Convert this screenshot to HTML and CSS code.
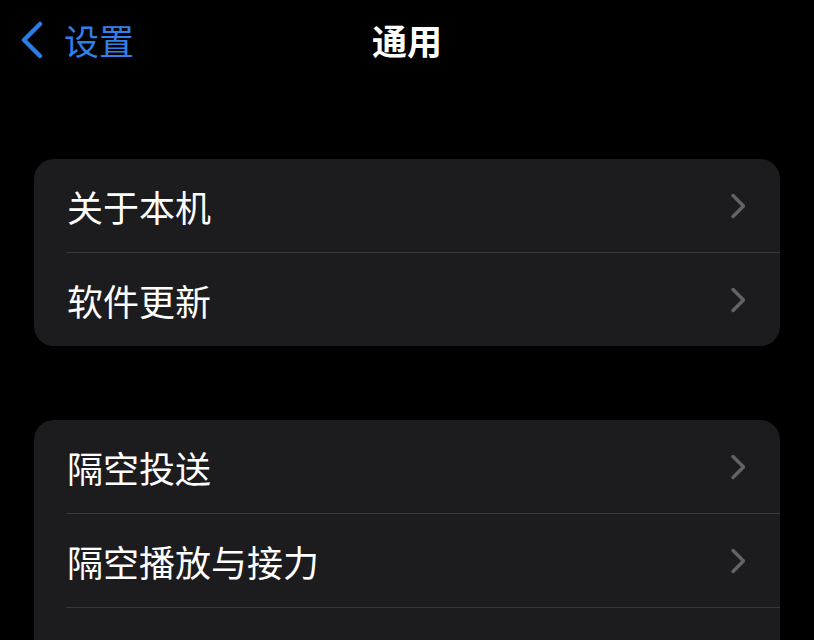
FILE: index.html
```html
<!DOCTYPE html>
<html lang="zh-CN">
<head>
<meta charset="utf-8">
<link rel="stylesheet" href="styles.css">
</head>
<body>
<div class="screen">
  <header class="nav">
    <div class="back">
      <svg class="back-icon" width="24" height="38" viewBox="0 0 24 38"><polyline points="20,3 4,19 20,35" fill="none" stroke="#2a7de6" stroke-width="4.5" stroke-linecap="round" stroke-linejoin="round"/></svg>
      <span class="back-label">设置</span>
    </div>
    <div class="title">通用</div>
    <div class="spacer"></div>
  </header>

  <section class="card first">
    <div class="row"><span class="label">关于本机</span><svg class="chev" width="16" height="26" viewBox="0 0 16 26"><polyline points="3,2.5 13.5,13 3,23.5" fill="none" stroke="#636367" stroke-width="3.4" stroke-linecap="round" stroke-linejoin="round"/></svg></div>
    <div class="row"><span class="label">软件更新</span><svg class="chev" width="16" height="26" viewBox="0 0 16 26"><polyline points="3,2.5 13.5,13 3,23.5" fill="none" stroke="#636367" stroke-width="3.4" stroke-linecap="round" stroke-linejoin="round"/></svg></div>
  </section>

  <section class="card second">
    <div class="row"><span class="label">隔空投送</span><svg class="chev" width="16" height="26" viewBox="0 0 16 26"><polyline points="3,2.5 13.5,13 3,23.5" fill="none" stroke="#636367" stroke-width="3.4" stroke-linecap="round" stroke-linejoin="round"/></svg></div>
    <div class="row"><span class="label">隔空播放与接力</span><svg class="chev" width="16" height="26" viewBox="0 0 16 26"><polyline points="3,2.5 13.5,13 3,23.5" fill="none" stroke="#636367" stroke-width="3.4" stroke-linecap="round" stroke-linejoin="round"/></svg></div>
    <div class="row"><span class="label">画中画</span><svg class="chev" width="16" height="26" viewBox="0 0 16 26"><polyline points="3,2.5 13.5,13 3,23.5" fill="none" stroke="#636367" stroke-width="3.4" stroke-linecap="round" stroke-linejoin="round"/></svg></div>
  </section>
</div>
</body>
</html>
```

FILE: styles.css
```css
html, body {
  margin: 0;
  padding: 0;
  background: #000;
}
body {
  font-family: "Noto Sans CJK SC", "Noto Sans", sans-serif;
  color: #fff;
  width: 814px;
  height: 640px;
  overflow: hidden;
}
.screen {
  display: flex;
  flex-direction: column;
}
.nav {
  height: 80px;
  display: grid;
  grid-template-columns: 1fr auto 1fr;
  align-items: center;
}
.back {
  display: flex;
  align-items: center;
  padding-left: 20px;
  gap: 20px;
}
.back-icon {
  display: block;
}
.back-label {
  font-size: 35px;
  line-height: 40px;
  color: #2f80ea;
}
.title {
  font-size: 35px;
  line-height: 40px;
  font-weight: 700;
  color: #fff;
}
.card {
  margin: 0 34px;
  background: #1c1c1e;
  border-radius: 20px;
  overflow: hidden;
}
.card.first {
  margin-top: 79px;
}
.card.second {
  margin-top: 74px;
}
.row {
  margin-left: 32px;
  height: 93px;
  padding-right: 34px;
  display: flex;
  align-items: center;
  justify-content: space-between;
  border-bottom: 1px solid #38383a;
}
.row:last-child {
  border-bottom: none;
}
.label {
  font-size: 36px;
  line-height: 40px;
  color: #fff;
  margin-left: 1px;
}
.chev {
  display: block;
}
```
